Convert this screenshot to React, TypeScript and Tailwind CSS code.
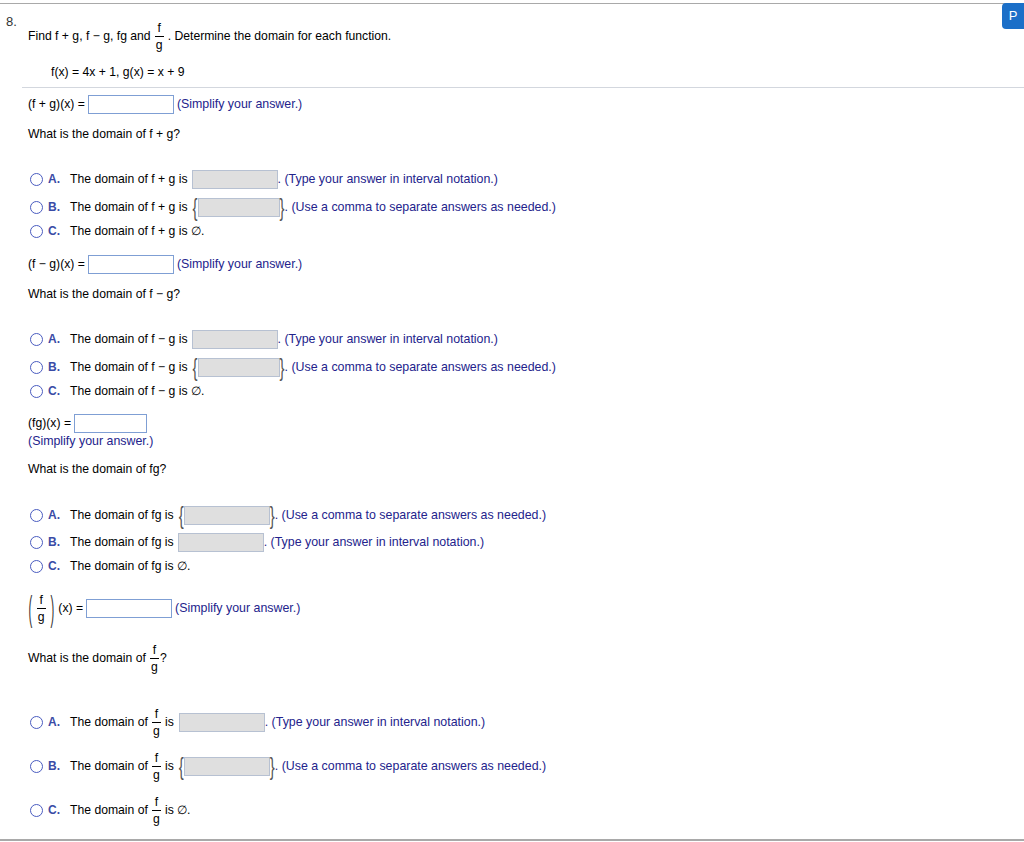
import type { ReactNode } from "react";

type BoxProps = { w: string };

// stacked fraction with a short bar between numerator and denominator
function Frac({ top, bottom }: { top: string; bottom: string }) {
  return (
    <span className="mx-[4px] inline-flex flex-col items-center leading-[16px]">
      <span>{top}</span>
      <span className="h-px w-[9px] bg-black" />
      <span>{bottom}</span>
    </span>
  );
}

function AnswerBox({ w }: BoxProps) {
  return <span className={`inline-block h-[19px] border border-[#7f9fd4] bg-white ${w}`} />;
}

function GrayBox({ w }: BoxProps) {
  return <span className={`inline-block h-[19px] border border-[#b7c1d2] bg-[#dfdfdf] ${w}`} />;
}

function Brace({ children }: { children: string }) {
  return (
    <span className="inline-block scale-y-[1.6] text-[15px] leading-none text-[#555]">
      {children}
    </span>
  );
}

function Hint({ children }: { children: ReactNode }) {
  return <span className="text-[12.4px] text-[#23238c]">{children}</span>;
}

function Choice({
  letter,
  className,
  children,
}: {
  letter: string;
  className: string;
  children: ReactNode;
}) {
  return (
    <div className={`flex items-center ${className}`}>
      <span className="ml-[2px] h-[13px] w-[13px] rounded-full border-[1.5px] border-[#4a5cc0]" />
      <span className="w-[27px] pl-[5px] text-[12px] font-bold text-[#3a4ba6]">{letter}.</span>
      <div className="flex items-center">{children}</div>
    </div>
  );
}

function IntervalTail() {
  return <Hint>. (Type your answer in interval notation.)</Hint>;
}

function SetTail() {
  return <Hint>. (Use a comma to separate answers as needed.)</Hint>;
}

export default function App() {
  return (
    <div className="relative h-[842px] w-[1024px] overflow-hidden bg-white font-['Liberation_Sans',Arial,sans-serif] text-[12.2px] text-black">
      <div className="mt-[3px] border-t border-[#a9a9a9]" />

      {/* tab at the top right corner */}
      <div className="absolute right-0 top-[3px] flex h-[26px] w-[22px] items-center justify-center rounded-l-[4px] bg-[#1b6fc8] text-[13px] text-white">
        P
      </div>

      <div className="flex">
        <div className="w-[28px] pl-[6px] pt-[8px] text-[13px] text-[#333]">8.</div>

        <div className="flex flex-1 flex-col">
          <div className="mt-[12px] flex h-[40px] items-center">
            <span>Find f + g, f − g, fg and</span>
            <Frac top="f" bottom="g" />
            <span>. Determine the domain for each function.</span>
          </div>

          <div className="mt-[6px] flex h-[20px] items-center pl-[23px]">
            f(x) = 4x + 1, g(x) = x + 9
          </div>

          <div className="-ml-[6px] mt-[5px] border-t border-[#d3d7de]" />

          {/* f + g */}
          <div className="mt-[6px] flex h-[20px] items-center gap-[3px]">
            <span>(f + g)(x) =</span>
            <AnswerBox w="w-[86px]" />
            <Hint>(Simplify your answer.)</Hint>
          </div>
          <div className="mt-[10px] flex h-[20px] items-center">What is the domain of f + g?</div>

          <Choice letter="A" className="mt-[25px] h-[20px]">
            <span className="mr-[4px]">The domain of f + g is</span>
            <GrayBox w="w-[86px]" />
            <IntervalTail />
          </Choice>
          <Choice letter="B" className="mt-[8px] h-[20px]">
            <span className="mr-[5px]">The domain of f + g is</span>
            <Brace>{"{"}</Brace>
            <GrayBox w="w-[82px]" />
            <Brace>{"}"}</Brace>
            <SetTail />
          </Choice>
          <Choice letter="C" className="mt-[4px] h-[20px]">
            <span>The domain of f + g is ∅.</span>
          </Choice>

          {/* f - g */}
          <div className="mt-[13px] flex h-[20px] items-center gap-[3px]">
            <span>(f − g)(x) =</span>
            <AnswerBox w="w-[86px]" />
            <Hint>(Simplify your answer.)</Hint>
          </div>
          <div className="mt-[10px] flex h-[20px] items-center">What is the domain of f − g?</div>

          <Choice letter="A" className="mt-[25px] h-[20px]">
            <span className="mr-[4px]">The domain of f − g is</span>
            <GrayBox w="w-[86px]" />
            <IntervalTail />
          </Choice>
          <Choice letter="B" className="mt-[8px] h-[20px]">
            <span className="mr-[5px]">The domain of f − g is</span>
            <Brace>{"{"}</Brace>
            <GrayBox w="w-[82px]" />
            <Brace>{"}"}</Brace>
            <SetTail />
          </Choice>
          <Choice letter="C" className="mt-[4px] h-[20px]">
            <span>The domain of f − g is ∅.</span>
          </Choice>

          {/* fg */}
          <div className="mt-[13px] flex h-[18px] items-center gap-[3px]">
            <span>(fg)(x) =</span>
            <AnswerBox w="w-[73px]" />
          </div>
          <div className="flex h-[18px] items-center">
            <Hint>(Simplify your answer.)</Hint>
          </div>
          <div className="mt-[9px] flex h-[20px] items-center">What is the domain of fg?</div>

          <Choice letter="A" className="mt-[26px] h-[20px]">
            <span className="mr-[5px]">The domain of fg is</span>
            <Brace>{"{"}</Brace>
            <GrayBox w="w-[86px]" />
            <Brace>{"}"}</Brace>
            <SetTail />
          </Choice>
          <Choice letter="B" className="mt-[7px] h-[20px]">
            <span className="mr-[4px]">The domain of fg is</span>
            <GrayBox w="w-[86px]" />
            <IntervalTail />
          </Choice>
          <Choice letter="C" className="mt-[4px] h-[20px]">
            <span>The domain of fg is ∅.</span>
          </Choice>

          {/* f / g */}
          <div className="mt-[12px] flex h-[40px] items-center">
            <span className="inline-block scale-x-[0.8] scale-y-[2.5] text-[14px] leading-none text-[#333]">(</span>
            <Frac top="f" bottom="g" />
            <span className="mr-[4px] inline-block scale-x-[0.8] scale-y-[2.5] text-[14px] leading-none text-[#333]">)</span>
            <span className="mr-[3px]">(x) =</span>
            <AnswerBox w="w-[86px]" />
            <span className="ml-[3px]">
              <Hint>(Simplify your answer.)</Hint>
            </span>
          </div>
          <div className="mt-[10px] flex h-[40px] items-center">
            <span>What is the domain of</span>
            <Frac top="f" bottom="g" />
            <span className="-ml-[3px]">?</span>
          </div>

          <Choice letter="A" className="mt-[24px] h-[40px]">
            <span>The domain of</span>
            <Frac top="f" bottom="g" />
            <span className="mr-[5px]">is</span>
            <GrayBox w="w-[86px]" />
            <IntervalTail />
          </Choice>
          <Choice letter="B" className="mt-[4px] h-[40px]">
            <span>The domain of</span>
            <Frac top="f" bottom="g" />
            <span className="mr-[5px]">is</span>
            <Brace>{"{"}</Brace>
            <GrayBox w="w-[86px]" />
            <Brace>{"}"}</Brace>
            <SetTail />
          </Choice>
          <Choice letter="C" className="mt-[4px] h-[40px]">
            <span>The domain of</span>
            <Frac top="f" bottom="g" />
            <span>is ∅.</span>
          </Choice>
        </div>
      </div>

      <div className="mt-[9px] h-[2px] bg-[#a9a9a9]" />
    </div>
  );
}
